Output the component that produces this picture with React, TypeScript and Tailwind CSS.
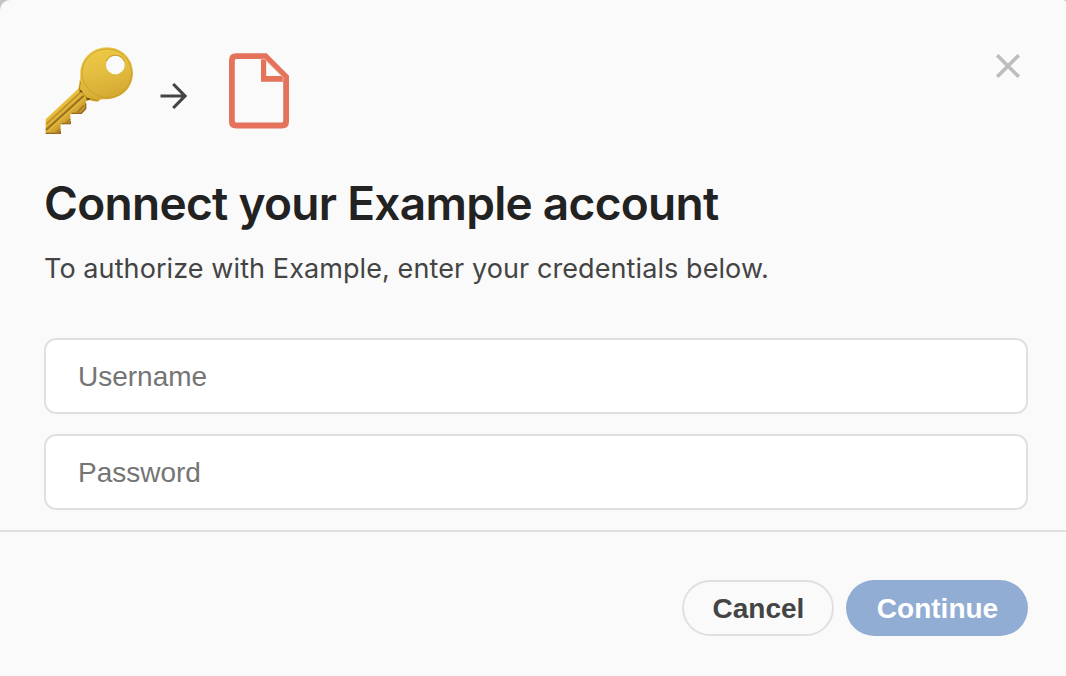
function KeyIcon() {
  return (
    <svg className="size-[90px] shrink-0" viewBox="45 33 270 270" aria-hidden="true">
      <defs>
        <linearGradient id="bow" x1="0.3" y1="0" x2="0.6" y2="1">
          <stop offset="0" stopColor="#efca48" />
          <stop offset="0.5" stopColor="#e2bc3e" />
          <stop offset="1" stopColor="#d3a62f" />
        </linearGradient>
        <linearGradient id="blade" x1="90" y1="205" x2="130" y2="251" gradientUnits="userSpaceOnUse">
          <stop offset="0" stopColor="#edc541" />
          <stop offset="0.35" stopColor="#dfb437" />
          <stop offset="0.7" stopColor="#d6aa34" />
          <stop offset="1" stopColor="#c0922a" />
        </linearGradient>
      </defs>
      <path
        d="M146 160 47 253 47 296 91 297 92 268 121 267 121 237 154 237 167 221 167 200 190 188Z"
        fill="url(#blade)"
      />
      <path d="M49 267 153 170" stroke="#b98a28" strokeWidth="4" />
      <path d="M48 285 161 182" stroke="#99701c" strokeWidth="6" />
      <path d="M50 291 165 187" stroke="#e6bd45" strokeWidth="3" />
      <path d="M47 295H91V288M95 266H121V258M125 235H154L167 221V205" fill="none" stroke="#946821" strokeWidth="4" />
      <path d="M78 296 91 282M107 266 121 252M139 236 162 211" stroke="#aa7b24" strokeWidth="5" />
      <path
        fillRule="evenodd"
        d="M148 139C150 147 145 155 145 165L169 191C178 193 190 202 206 199C209 193 214 193 230 193C276 191 309 157 309 115C309 70 275 37 231 37C186 37 151 72 151 116C151 126 152 133 148 139ZM256 62A28 28 0 1 1 256 118A28 28 0 1 1 256 62Z"
        fill="url(#bow)"
      />
      <path
        d="M156 121C153 76 188 42 231 42C275 42 304 75 304 115C304 154 275 187 231 188C198 188 162 160 156 121Z"
        fill="none"
        stroke="#c59a2b"
        strokeWidth="2.5"
      />
      <path d="M152 141C150 150 148 157 148 164L171 189 204 197" fill="none" stroke="#b98a21" strokeWidth="3" />
      <path d="M149 166 156 171M169 191 179 193" stroke="#68480e" strokeWidth="5" />
      <path d="M229 79A29 29 0 0 1 283 79" fill="none" stroke="#c99b2a" strokeWidth="3" />
    </svg>
  );
}

export default function App() {
  return (
    <div className="h-[676px] w-[1066px] overflow-hidden bg-[#c4c4c4] font-['Inter',sans-serif]">
      <main className="flex h-full flex-col rounded-tl-[10px] rounded-tr-[3px] bg-[#fafafa]">
        <section className="flex h-[532px] flex-col border-b-2 border-[#e0e0e0] pr-[38px] pl-11">
          <header className="flex h-[179px] items-start">
            <div className="flex flex-1 items-start pt-[46px] pl-px">
              <KeyIcon />
              <svg className="mt-[35px] ml-[24px] h-[30px] w-[30px]" viewBox="0 0 30 30" fill="none" stroke="#444" strokeWidth="3.2" aria-hidden="true">
                <path d="M1.5 15H26M14.2 3 26 15 14.2 27" />
              </svg>
              <svg className="mt-[7px] ml-10 h-[76px] w-[60px]" viewBox="0 0 60 76" aria-hidden="true">
                <path
                  fill="#e5735c"
                  fillRule="evenodd"
                  d="M7 .3H37.6L60 22.8V68.5Q60 75.5 53 75.5H7Q0 75.5 0 68.5V7.3Q0 .3 7 .3ZM7.4 6Q5.8 6 5.8 7.6V68Q5.8 69.6 7.4 69.6H52.6Q54.2 69.6 54.2 68V28.7H32V6Z"
                />
                <path fill="#fafafa" d="M37.2 7.8 52.5 22.9H37.2Z" />
                <path d="M32 6H35.6L54.2 24.6V28" fill="none" stroke="#f6d0c8" strokeWidth=".7" />
              </svg>
            </div>
            <button aria-label="Close" className="mt-[53px] mr-[7px] size-[26px]">
              <svg viewBox="0 0 26 26" fill="none" stroke="#bdbdbd" strokeWidth="3.7" aria-hidden="true">
                <path d="M2.2 2.2 23.8 23.8M23.8 2.2 2.2 23.8" />
              </svg>
            </button>
          </header>
          <h1 className="h-[69px] text-[46px] leading-[48px] font-semibold tracking-[-0.7px] whitespace-nowrap text-[#222]">
            Connect your Example account
          </h1>
          <p className="h-[90px] text-[27px] leading-[42px] tracking-[0.09px] whitespace-nowrap text-[#444]">
            To authorize with Example, enter your credentials below.
          </p>
          <form className="flex flex-col gap-5">
            <input
              aria-label="Username"
              placeholder="Username"
              className="h-[76px] rounded-[12px] border-2 border-[#e0e0e0] bg-white px-8 pt-[2px] font-['Liberation_Sans',sans-serif] text-[28px] placeholder:text-[#757575]"
            />
            <input
              aria-label="Password"
              type="password"
              placeholder="Password"
              className="h-[76px] rounded-[12px] border-2 border-[#e0e0e0] bg-white px-8 pt-[2px] font-['Liberation_Sans',sans-serif] text-[28px] placeholder:text-[#757575]"
            />
          </form>
        </section>
        <footer className="flex justify-end gap-3 pt-12 pr-[38px] font-['Liberation_Sans',sans-serif] text-[28px] font-bold">
          <button className="h-14 w-[152px] rounded-full border-2 border-[#e0e0e0] pt-[2px] pl-px text-[#444]">Cancel</button>
          <button className="h-14 w-[182px] rounded-full bg-[#92add3] pt-[2px] pl-px text-white">Continue</button>
        </footer>
      </main>
    </div>
  );
}
